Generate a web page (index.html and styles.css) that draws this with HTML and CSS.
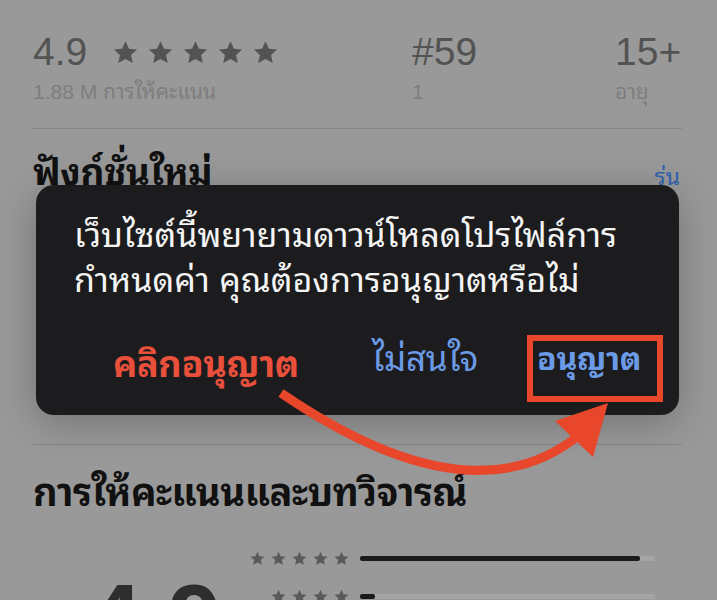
FILE: index.html
```html
<!DOCTYPE html>
<html lang="th">
<head>
<meta charset="utf-8">
<link rel="stylesheet" href="styles.css">
</head>
<body>
<svg width="0" height="0" class="defs">
  <defs>
    <symbol id="star" viewBox="0 0 24 24"><path d="M12 1.2l3.3 7.1 7.8.8-5.8 5.3 1.7 7.7L12 18.2l-7 3.9 1.7-7.7L.9 9.1l7.8-.8z"/></symbol>
  </defs>
</svg>
<main class="page">
  <section class="stats">
    <div class="stat">
      <div class="big">4.9<span class="stars-lg">
        <svg><use href="#star"/></svg><svg><use href="#star"/></svg><svg><use href="#star"/></svg><svg><use href="#star"/></svg><svg><use href="#star"/></svg></span></div>
      <div class="sub">1.88 M การให้คะแนน</div>
    </div>
    <div class="stat">
      <div class="big">#59</div>
      <div class="sub">1</div>
    </div>
    <div class="stat">
      <div class="big">15+</div>
      <div class="sub">อายุ</div>
    </div>
  </section>
  <hr class="rule rule-top">
  <section class="whatsnew">
    <h2 class="title">ฟังก์ชั่นใหม่</h2>
    <span class="link">รุ่น</span>
  </section>
  <div class="covered"></div>
  <hr class="rule">
  <section class="reviews">
    <h2 class="title title-lg">การให้คะแนนและบทวิจารณ์</h2>
    <div class="summary">
      <div class="score">4.9</div>
      <div class="hist">
        <div class="hrow">
          <span class="stars-sm"><svg><use href="#star"/></svg><svg><use href="#star"/></svg><svg><use href="#star"/></svg><svg><use href="#star"/></svg><svg><use href="#star"/></svg></span>
          <span class="track"><span class="fill" style="width:95%"></span></span>
        </div>
        <div class="hrow">
          <span class="stars-sm"><svg><use href="#star"/></svg><svg><use href="#star"/></svg><svg><use href="#star"/></svg><svg><use href="#star"/></svg></span>
          <span class="track"><span class="fill" style="width:5%"></span></span>
        </div>
      </div>
    </div>
  </section>
</main>

<div class="dialog">
  <p class="message">เว็บไซต์นี้พยายามดาวน์โหลดโปรไฟล์การ<br>กำหนดค่า คุณต้องการอนุญาตหรือไม่</p>
  <div class="actions">
    <span class="hint">คลิกอนุญาต</span>
    <span class="btn">ไม่สนใจ</span>
    <span class="btn btn-strong">อนุญาต</span>
  </div>
</div>

<svg class="annot" width="717" height="600" viewBox="0 0 717 600">
  <rect x="530" y="338" width="130" height="61" fill="none" stroke="#e8472c" stroke-width="6"/>
  <path d="M281 393 Q470 522 578 436" fill="none" stroke="#e8472c" stroke-width="9"/>
  <polygon points="608,403 555,421 593,457" fill="#e8472c"/>
</svg>
</body>
</html>
```

FILE: styles.css
```css
* { box-sizing: border-box; }
html, body { margin: 0; padding: 0; }
body {
  width: 717px;
  height: 600px;
  overflow: hidden;
  background: #999999;
  font-family: "Liberation Sans", "Noto Sans Thai Looped", "Loma", "Garuda", "Waree", "Umpush", "Noto Sans Thai", sans-serif;
  position: relative;
}
.defs { position: absolute; }
.page {
  padding: 30px 35px 0 33px;
}
.stats {
  display: grid;
  grid-template-columns: 379px 203px 1fr;
}
.big {
  font-family: "Liberation Sans", "Noto Sans", sans-serif;
  font-size: 39px;
  line-height: 44px;
  color: #535353;
  display: flex;
  align-items: center;
}
.stars-lg {
  display: inline-flex;
  gap: 10px;
  margin-left: 26px;
}
.stars-lg svg { width: 25px; height: 25px; fill: #535353; }
.sub {
  font-size: 21px;
  line-height: 26px;
  margin-top: 5px;
  color: #7e7e7e;
}
.rule {
  border: 0;
  border-top: 1px solid #868686;
  margin: 0;
}
.rule-top { margin-top: 23px; }
.whatsnew {
  display: flex;
  justify-content: space-between;
  align-items: baseline;
  margin-top: 22px;
}
.title {
  margin: 0;
  font-size: 37px;
  line-height: 44px;
  font-weight: 700;
  color: #111;
  letter-spacing: -0.3px;
}
.link {
  font-size: 23px;
  color: #3062ae;
  margin-right: 2px;
}
.covered { height: 249px; }
.reviews { padding-top: 24px; }
.title-lg { font-size: 38px; line-height: 48px; letter-spacing: -0.4px; }
.summary {
  display: flex;
  margin-top: 32px;
}
.score {
  width: 217px;
  padding-left: 55px;
  padding-top: 22px;
  font-family: "Liberation Sans", sans-serif;
  font-weight: 700;
  font-size: 96px;
  line-height: 96px;
  letter-spacing: 0;
  color: #2e2e2e;
}
.hist {
  display: flex;
  flex-direction: column;
  gap: 20px;
}
.hrow {
  display: flex;
  align-items: center;
  height: 18px;
  gap: 11px;
}
.stars-sm {
  width: 99px;
  display: flex;
  justify-content: flex-end;
  gap: 6px;
}
.stars-sm svg { width: 15px; height: 15px; fill: #5a5a5a; }
.track {
  width: 295px;
  height: 5px;
  background: #a5a5a5;
  border-radius: 2px;
  display: block;
}
.fill {
  display: block;
  height: 100%;
  background: #1a1a1a;
  border-radius: 2px;
}
.dialog {
  position: absolute;
  left: 36px;
  top: 185px;
  width: 643px;
  height: 230px;
  background: #1c1c1e;
  border-radius: 18px;
  box-shadow: 0 8px 40px rgba(0,0,0,0.25);
  padding: 28px 20px 0 38px;
}
.message {
  margin: 0;
  color: #f4f4f4;
  font-size: 34px;
  line-height: 45px;
  letter-spacing: 0;
  white-space: nowrap;
}
.actions {
  display: flex;
  align-items: flex-start;
  margin-top: 34px;
  padding-left: 39px;
}
.hint {
  flex: none;
  color: #e9503b;
  font-weight: 700;
  font-size: 36px;
  line-height: 44px;
  width: 259px;
  margin-top: 6px;
  letter-spacing: -0.3px;
}
.btn {
  flex: none;
  color: #6b9ae6;
  font-size: 35px;
  line-height: 44px;
  width: 165px;
  letter-spacing: -0.3px;
}
.btn-strong { font-weight: 700; font-size: 32px; width: auto; }
.annot {
  position: absolute;
  left: 0;
  top: 0;
}
```
